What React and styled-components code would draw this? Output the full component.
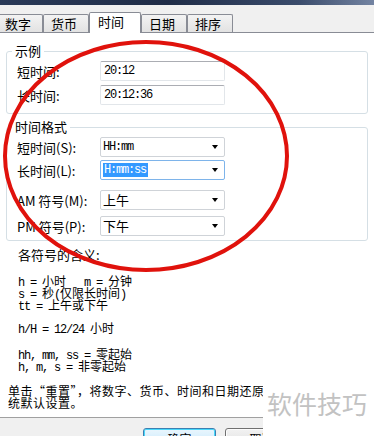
import styled, { createGlobalStyle } from 'styled-components'

const GlobalStyle = createGlobalStyle`
	html, body {
		margin: 0;
		padding: 0;
		background: #ffffff;
	}
	body {
		font-family: "Noto Sans CJK SC", "Liberation Sans", sans-serif;
		font-size: 12px;
		color: #000000;
	}
`

const tabs = [
	{ label: '数字', w: 46 },
	{ label: '货币', w: 46 },
	{ label: '时间', w: 52, active: true },
	{ label: '日期', w: 46 },
	{ label: '排序', w: 46 },
]

const formats = [
	{ label: '短时间(S):', value: 'HH:mm', mono: true, mt: 0 },
	{ label: '长时间(L):', value: 'H:mm:ss', mono: true, mt: 3, focused: true },
	{ label: 'AM 符号(M):', value: '上午', mt: 10 },
	{ label: 'PM 符号(P):', value: '下午', mt: 6 },
]

export default function App() {
	return (
		<>
			<GlobalStyle />
			<Page>
				<TitleEdge />
				<TabStrip>
					{tabs.map((t) => (
						<Tab key={t.label} $w={t.w} $active={t.active}>{t.label}</Tab>
					))}
				</TabStrip>

				<Panel>
					<GroupBox>
						<Legend>示例</Legend>
						<Row $mt={0}>
							<Label>短时间:</Label>
							<TextBox>20:12</TextBox>
						</Row>
						<Row $mt={4}>
							<Label>长时间:</Label>
							<TextBox>20:12:36</TextBox>
						</Row>
					</GroupBox>

					<GroupBox $second>
						<Legend>时间格式</Legend>
						{formats.map((f) => (
							<Row key={f.label} $mt={f.mt}>
								<Label>{f.label}</Label>
								<Combo $focused={f.focused}>
									<ComboText $mono={f.mono}>
										{f.focused ? <Selected>{f.value}</Selected> : f.value}
									</ComboText>
									<Arrow />
								</Combo>
							</Row>
						))}
					</GroupBox>

					<Heading>各符号的含义:</Heading>

					<KeyBlock $mt={13}>
						<KeyLine>h = <Han>小时</Han>   m = <Han>分钟</Han></KeyLine>
						<KeyLine>s = <Han>秒</Han>(<Han>仅限长时间</Han>)</KeyLine>
						<KeyLine>tt = <Han>上午或下午</Han></KeyLine>
					</KeyBlock>
					<KeyBlock $mt={11}>
						<KeyLine>h/H = 12/24 <Han>小时</Han></KeyLine>
					</KeyBlock>
					<KeyBlock $mt={14}>
						<KeyLine>hh, mm, ss = <Han>零起始</Han></KeyLine>
						<KeyLine>h, m, s = <Han>非零起始</Han></KeyLine>
					</KeyBlock>

					<Note>
						单击“重置”，将数字、货币、时间和日期还原到系<br />
						统默认设置。
					</Note>
				</Panel>

				<Footer>
					<Button $default>确定</Button>
					<Button>取消</Button>
				</Footer>

				<Watermark>软件技巧</Watermark>

				<Mark viewBox="0 0 374 436">
					<ellipse cx="146" cy="156" rx="141" ry="114" fill="none" stroke="#e0120c" strokeWidth="4" />
				</Mark>
			</Page>
		</>
	)
}

const Page = styled.div`
	position: relative;
	width: 374px;
	height: 436px;
	overflow: hidden;
	background: #ffffff;
`

const TitleEdge = styled.div`
	height: 5px;
	background: linear-gradient(90deg, #2a3a58 0%, #1f2c47 45%, #3b4c6c 80%, #7384a2 100%);
`

const TabStrip = styled.div`
	display: flex;
	align-items: flex-end;
	height: 27px;
	background: #f0f0f0;
	border-bottom: 1px solid #898c95;

	& > :first-child {
		margin-left: -3px;
	}
`

const Tab = styled.div`
	position: relative;
	box-sizing: border-box;
	width: ${(p) => p.$w}px;
	height: ${(p) => (p.$active ? 21 : 18)}px;
	margin-bottom: ${(p) => (p.$active ? -1 : 0)}px;
	padding: ${(p) => (p.$active ? '0 0 3px 8px' : '0 0 0 7px')};
	display: flex;
	align-items: center;
	border: 1px solid #898c95;
	border-bottom: none;
	border-radius: 2px 2px 0 0;
	background: ${(p) => (p.$active ? '#ffffff' : 'linear-gradient(#f3f3f3, #e2e2e2)')};
	z-index: ${(p) => (p.$active ? 2 : 1)};
	font-size: 13px;
	line-height: 14px;
`

const Panel = styled.div`
	box-sizing: border-box;
	height: 384px;
	padding: 11px 6px 0;
	background: #ffffff;
`

const GroupBox = styled.fieldset`
	margin: ${(p) => (p.$second ? '6px 0 0' : '0')};
	padding: 3px 0 ${(p) => (p.$second ? 4 : 8)}px 0;
	min-width: 0;
	border: 1px solid #d5dfe5;
	border-radius: 3px;
`

const Legend = styled.legend`
	margin-left: 5px;
	padding: 0 3px;
	font-size: 13px;
	line-height: 14px;
`

const Row = styled.div`
	display: flex;
	align-items: center;
	height: 20px;
	margin-top: ${(p) => p.$mt}px;
	padding-left: 10px;
`

const Label = styled.div`
	width: 83px;
	font-size: 13px;
	white-space: nowrap;
`

const TextBox = styled.div`
	box-sizing: border-box;
	width: 125px;
	height: 20px;
	padding: 0 0 0 3px;
	display: flex;
	align-items: center;
	border: 1px solid #e2e6ea;
	border-top-color: #abadb3;
	border-radius: 2px;
	font-family: "Liberation Mono", monospace;
	font-size: 12px;
	letter-spacing: -1.2px;
`

const Combo = styled.div`
	box-sizing: border-box;
	width: 125px;
	height: 20px;
	padding: 0 6px 0 2px;
	display: flex;
	align-items: center;
	justify-content: space-between;
	border: 1px solid ${(p) => (p.$focused ? '#7eb4ea' : '#cfd3d8')};
	border-radius: 2px;
	background: #ffffff;
`

const ComboText = styled.span`
	font-family: ${(p) => (p.$mono ? '"Liberation Mono", monospace' : '"Noto Sans CJK SC", sans-serif')};
	font-size: ${(p) => (p.$mono ? 12 : 13)}px;
	letter-spacing: ${(p) => (p.$mono ? '-1.2px' : '0')};
	line-height: 14px;
`

const Selected = styled.span`
	display: inline-block;
	padding: 0 2px 0 1px;
	background: #3399ff;
	color: #ffffff;
`

const Arrow = styled.span`
	width: 0;
	height: 0;
	border-left: 3.5px solid transparent;
	border-right: 3.5px solid transparent;
	border-top: 4px solid #000000;
`

const Heading = styled.div`
	margin-top: 7px;
	padding-left: 12px;
	font-size: 13px;
	line-height: 14px;
`

const KeyBlock = styled.div`
	margin-top: ${(p) => p.$mt}px;
	padding-left: 12px;
`

const KeyLine = styled.div`
	height: 12px;
	font-family: "Liberation Mono", monospace;
	font-size: 12px;
	line-height: 12px;
	letter-spacing: -1.2px;
	white-space: pre;
`

const Han = styled.span`
	font-family: "Noto Sans CJK SC", sans-serif;
	letter-spacing: 0;
`

const Note = styled.div`
	margin-top: 13px;
	padding-left: 2px;
	font-size: 12px;
	line-height: 12px;
	letter-spacing: 0.5px;
	white-space: nowrap;
`

const Footer = styled.div`
	display: flex;
	gap: 9px;
	height: 18px;
	padding: 10px 0 0 143px;
	border-top: 1px solid #a0a0a0;
	background: #f0f0f0;
`

const Button = styled.div`
	box-sizing: border-box;
	flex: none;
	width: 73px;
	height: 23px;
	padding-top: 3px;
	text-align: center;
	border: 1px solid ${(p) => (p.$default ? '#3c7fb1' : '#707070')};
	border-radius: 3px;
	background: ${(p) => (p.$default ? 'linear-gradient(#eaf6fd, #bee6fd)' : 'linear-gradient(#f2f2f2, #dddddd)')};
	box-shadow: ${(p) => (p.$default ? 'inset 0 0 0 1px #48d8fb' : 'inset 0 0 0 1px #fcfcfc')};
	font-size: 12px;
	line-height: 14px;
`

const Watermark = styled.div`
	position: absolute;
	left: 263px;
	top: 383px;
	right: 0;
	bottom: 0;
	padding: 8px 0 0 4px;
	background: #ffffff;
	color: #c2c2c2;
	font-size: 25px;
	line-height: 25px;
	white-space: nowrap;
`

const Mark = styled.svg`
	position: absolute;
	left: 0;
	top: 0;
	width: 374px;
	height: 436px;
	pointer-events: none;
`
